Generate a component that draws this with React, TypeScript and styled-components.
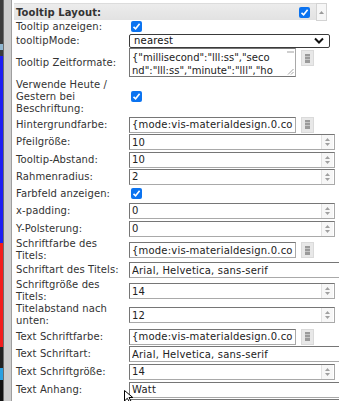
import React from 'react';
import styled, {createGlobalStyle} from 'styled-components';

const GlobalStyle = createGlobalStyle`
body {
margin: 0;
background: #fff;
font-family: "DejaVu Sans", Verdana, sans-serif;
}
`

const Screen = styled.div`
width: 339px;
height: 401px;
display: flex;
overflow: hidden;
position: relative;
background: #fff;
`
const DesktopStrip = styled.div`
width: 3px;
flex: none;
background: linear-gradient(to bottom, #3b3b3b 0, #3b3b3b 44px, #8fb6d0 44px, #8fb6d0 50px, #3b3b3b 50px, #3b3b3b 56px, #1c1cf2 56px, #1c1cf2 243px, #f21c1c 243px, #f21c1c 347px, #222 347px, #222 368px, #2aa0e0 368px, #2aa0e0 380px, #111 380px);
`
const SideBar = styled.div`
width: 7px;
flex: none;
background: #cdcdcd;
border-left: 1px solid #6d6d6d;
border-right: 1px solid #9e9e9e;
`
const Panel = styled.div`
flex: 1;
padding-top: 3px;
display: flex;
flex-direction: column;
min-width: 0;
`
const Header = styled.div`
height: 17px;
margin: 0 12px 0 2px;
display: flex;
align-items: center;
background: linear-gradient(to bottom, #ececec, #e2e2e2);
border-top: 1px solid #dcdcdc;
box-sizing: border-box;
padding-left: 2px;
`
const HeaderTitle = styled.div`
flex: 1;
font-weight: bold;
font-size: 10px;
color: #333;
letter-spacing: 0.1px;
`
const CollapseButton = styled.div`
width: 11px;
height: 18px;
margin-left: 6px;
box-sizing: border-box;
border: 1px solid #d3d3d3;
background: #f6f6f6;
display: flex;
align-items: center;
justify-content: center;
`
const Row = styled.div<{$h: number}>`
display: grid;
grid-template-columns: 117px 1fr;
height: ${p => p.$h}px;
align-items: center;
flex: none;
`
const Label = styled.div`
padding-left: 4px;
font-size: 10px;
line-height: 12px;
color: #333;
letter-spacing: 0.1px;
white-space: nowrap;
`
const Value = styled.div`
display: flex;
align-items: center;
gap: 5px;
min-width: 0;
`
const Box = styled.div<{$w: number}>`
width: ${p => p.$w}px;
height: 16px;
flex: none;
box-sizing: border-box;
border: 1px solid #a9a9a9;
border-top-color: #767676;
border-left-color: #767676;
display: flex;
align-items: center;
font-size: 10px;
letter-spacing: 0.2px;
color: #222;
padding-left: 2px;
overflow: hidden;
white-space: nowrap;
`
const BoxText = styled.span`
flex: 1;
overflow: hidden;
`
const Spinner = styled.div`
width: 11px;
height: 14px;
border-left: 1px solid #e2e2e2;
background: #f7f7f7;
display: flex;
flex-direction: column;
align-items: center;
justify-content: center;
gap: 2px;
margin-right: 1px;
`
const PickerButton = styled.div<{$top?: boolean}>`
width: 13px;
height: 16px;
box-sizing: border-box;
flex: none;
background: #e8e8e8;
border: 1px solid #dadada;
display: flex;
align-items: center;
justify-content: center;
align-self: ${p => p.$top ? 'flex-start' : 'center'};
margin-top: ${p => p.$top ? '2px' : '0'};
`
const Check = styled.div`
width: 11px;
height: 11px;
margin-left: 2px;
border-radius: 2px;
background: #0b73f0;
display: flex;
align-items: center;
justify-content: center;
flex: none;
`
const Select = styled.div`
width: 201px;
height: 14px;
box-sizing: border-box;
border: 1px solid #3a3a3a;
border-radius: 2px;
display: flex;
align-items: center;
justify-content: space-between;
padding: 0 5px 0 4px;
font-size: 10px;
letter-spacing: 0.2px;
color: #111;
`
const TextArea = styled.div`
width: 167px;
height: 29px;
box-sizing: border-box;
border: 1px solid #767676;
border-right-color: #a9a9a9;
display: flex;
align-self: flex-start;
`
const TextAreaLines = styled.div`
flex: 1;
padding: 2px 0 0 2px;
font-size: 10px;
line-height: 13px;
color: #222;
overflow: hidden;
white-space: nowrap;
`
const TextAreaBar = styled.div`
width: 10px;
display: flex;
flex-direction: column;
justify-content: space-between;
align-items: center;
padding: 2px 0 1px;
`
const Thumb = styled.div`
width: 7px;
height: 2px;
background: #cfcfcf;
`

const CheckMark = () => (
    <Check>
        <svg width="9" height="9" viewBox="0 0 9 9">
            <path d="M1.5 4.8 L3.6 6.8 L7.6 1.8" fill="none" stroke="#fff" strokeWidth="1.6"/>
        </svg>
    </Check>
)

const PickerIcon = () => (
    <svg width="5" height="9" viewBox="0 0 5 9">
        <rect x="0" y="0" width="5" height="9" fill="#9a9a9a"/>
        <rect x="0" y="2" width="5" height="1" fill="#c4c4c4"/>
        <rect x="0" y="5" width="5" height="1" fill="#c4c4c4"/>
    </svg>
)

const SpinBox = ({value, w = 206}: {value: string, w?: number}) => (
    <Box $w={w}>
        <BoxText>{value}</BoxText>
        <Spinner>
            <svg width="5" height="3" viewBox="0 0 5 3"><path d="M0 3 L2.5 0 L5 3Z" fill="#a0a0a0"/></svg>
            <svg width="5" height="3" viewBox="0 0 5 3"><path d="M0 0 L2.5 3 L5 0Z" fill="#a0a0a0"/></svg>
        </Spinner>
    </Box>
)

const ColorField = ({value}: {value: string}) => (
    <>
        <Box $w={167}><BoxText>{value}</BoxText></Box>
        <PickerButton><PickerIcon/></PickerButton>
    </>
)

const PlainField = ({value}: {value: string}) => (
    <Box $w={215}><BoxText>{value}</BoxText></Box>
)

const Cursor = styled.svg`
position: absolute;
left: 124px;
top: 390px;
`

// the field only shows the start of the binding
const colorValue = '{mode:vis-materialdesign.0.co'

const App = () => {
    return (
        <Screen>
            <GlobalStyle/>
            <DesktopStrip/>
            <SideBar/>
            <Panel>
                <Header>
                    <HeaderTitle>Tooltip Layout:</HeaderTitle>
                    <CheckMark/>
                    <CollapseButton>
                        <svg width="5" height="3" viewBox="0 0 5 3"><path d="M0 3 L2.5 0 L5 3Z" fill="#9a9a9a"/></svg>
                    </CollapseButton>
                </Header>
                <Row $h={13}>
                    <Label>Tooltip anzeigen:</Label>
                    <Value><CheckMark/></Value>
                </Row>
                <Row $h={15}>
                    <Label>tooltipMode:</Label>
                    <Value>
                        <Select>
                            <span>nearest</span>
                            <svg width="10" height="7" viewBox="0 0 10 7">
                                <path d="M1 1.5 L5 5.5 L9 1.5" fill="none" stroke="#111" strokeWidth="2"/>
                            </svg>
                        </Select>
                    </Value>
                </Row>
                <Row $h={29}>
                    <Label>Tooltip Zeitformate:</Label>
                    <Value>
                        <TextArea>
                            <TextAreaLines>
                                {'{"millisecond":"lll:ss","seco'}<br/>
                                {'nd":"lll:ss","minute":"lll","ho'}
                            </TextAreaLines>
                            <TextAreaBar>
                                <Thumb/>
                                <svg width="7" height="7" viewBox="0 0 7 7">
                                    <path d="M1 6.5 L6.5 1 M4 6.5 L6.5 4" stroke="#8a8a8a" strokeWidth="0.8"/>
                                </svg>
                            </TextAreaBar>
                        </TextArea>
                        <PickerButton $top><PickerIcon/></PickerButton>
                    </Value>
                </Row>
                <Row $h={39}>
                    <Label>Verwende Heute /<br/>Gestern bei<br/>Beschriftung:</Label>
                    <Value><CheckMark/></Value>
                </Row>
                <Row $h={17}>
                    <Label>Hintergrundfarbe:</Label>
                    <Value><ColorField value={colorValue}/></Value>
                </Row>
                <Row $h={18}>
                    <Label>Pfeilgröße:</Label>
                    <Value><SpinBox value="10"/></Value>
                </Row>
                <Row $h={17}>
                    <Label>Tooltip-Abstand:</Label>
                    <Value><SpinBox value="10"/></Value>
                </Row>
                <Row $h={17}>
                    <Label>Rahmenradius:</Label>
                    <Value><SpinBox value="2"/></Value>
                </Row>
                <Row $h={17}>
                    <Label>Farbfeld anzeigen:</Label>
                    <Value><CheckMark/></Value>
                </Row>
                <Row $h={17}>
                    <Label>x-padding:</Label>
                    <Value><SpinBox value="0"/></Value>
                </Row>
                <Row $h={19}>
                    <Label>Y-Polsterung:</Label>
                    <Value><SpinBox value="0"/></Value>
                </Row>
                <Row $h={23}>
                    <Label>Schriftfarbe des<br/>Titels:</Label>
                    <Value><ColorField value={colorValue}/></Value>
                </Row>
                <Row $h={18}>
                    <Label>Schriftart des Titels:</Label>
                    <Value><PlainField value="Arial, Helvetica, sans-serif"/></Value>
                </Row>
                <Row $h={24}>
                    <Label>Schriftgröße des<br/>Titels:</Label>
                    <Value><SpinBox value="14"/></Value>
                </Row>
                <Row $h={24}>
                    <Label>Titelabstand nach<br/>unten:</Label>
                    <Value><SpinBox value="12"/></Value>
                </Row>
                <Row $h={19}>
                    <Label>Text Schriftfarbe:</Label>
                    <Value><ColorField value={colorValue}/></Value>
                </Row>
                <Row $h={16}>
                    <Label>Text Schriftart:</Label>
                    <Value><PlainField value="Arial, Helvetica, sans-serif"/></Value>
                </Row>
                <Row $h={19}>
                    <Label>Text Schriftgröße:</Label>
                    <Value><SpinBox value="14"/></Value>
                </Row>
                <Row $h={17}>
                    <Label>Text Anhang:</Label>
                    <Value><PlainField value="Watt"/></Value>
                </Row>
                <Row $h={17}>
                    <Label>Text Ausrichtung:</Label>
                    <Value><PlainField value=""/></Value>
                </Row>
            </Panel>
            <Cursor width="12" height="12" viewBox="0 0 12 12">
                <path d="M0.5 0.5 L0.5 11 L3.3 8.3 L5.5 12 L7 11.2 L5 7.5 L8.8 7.5 Z" fill="#fff" stroke="#000" strokeWidth="1"/>
            </Cursor>
        </Screen>
    );
};

export default App;
